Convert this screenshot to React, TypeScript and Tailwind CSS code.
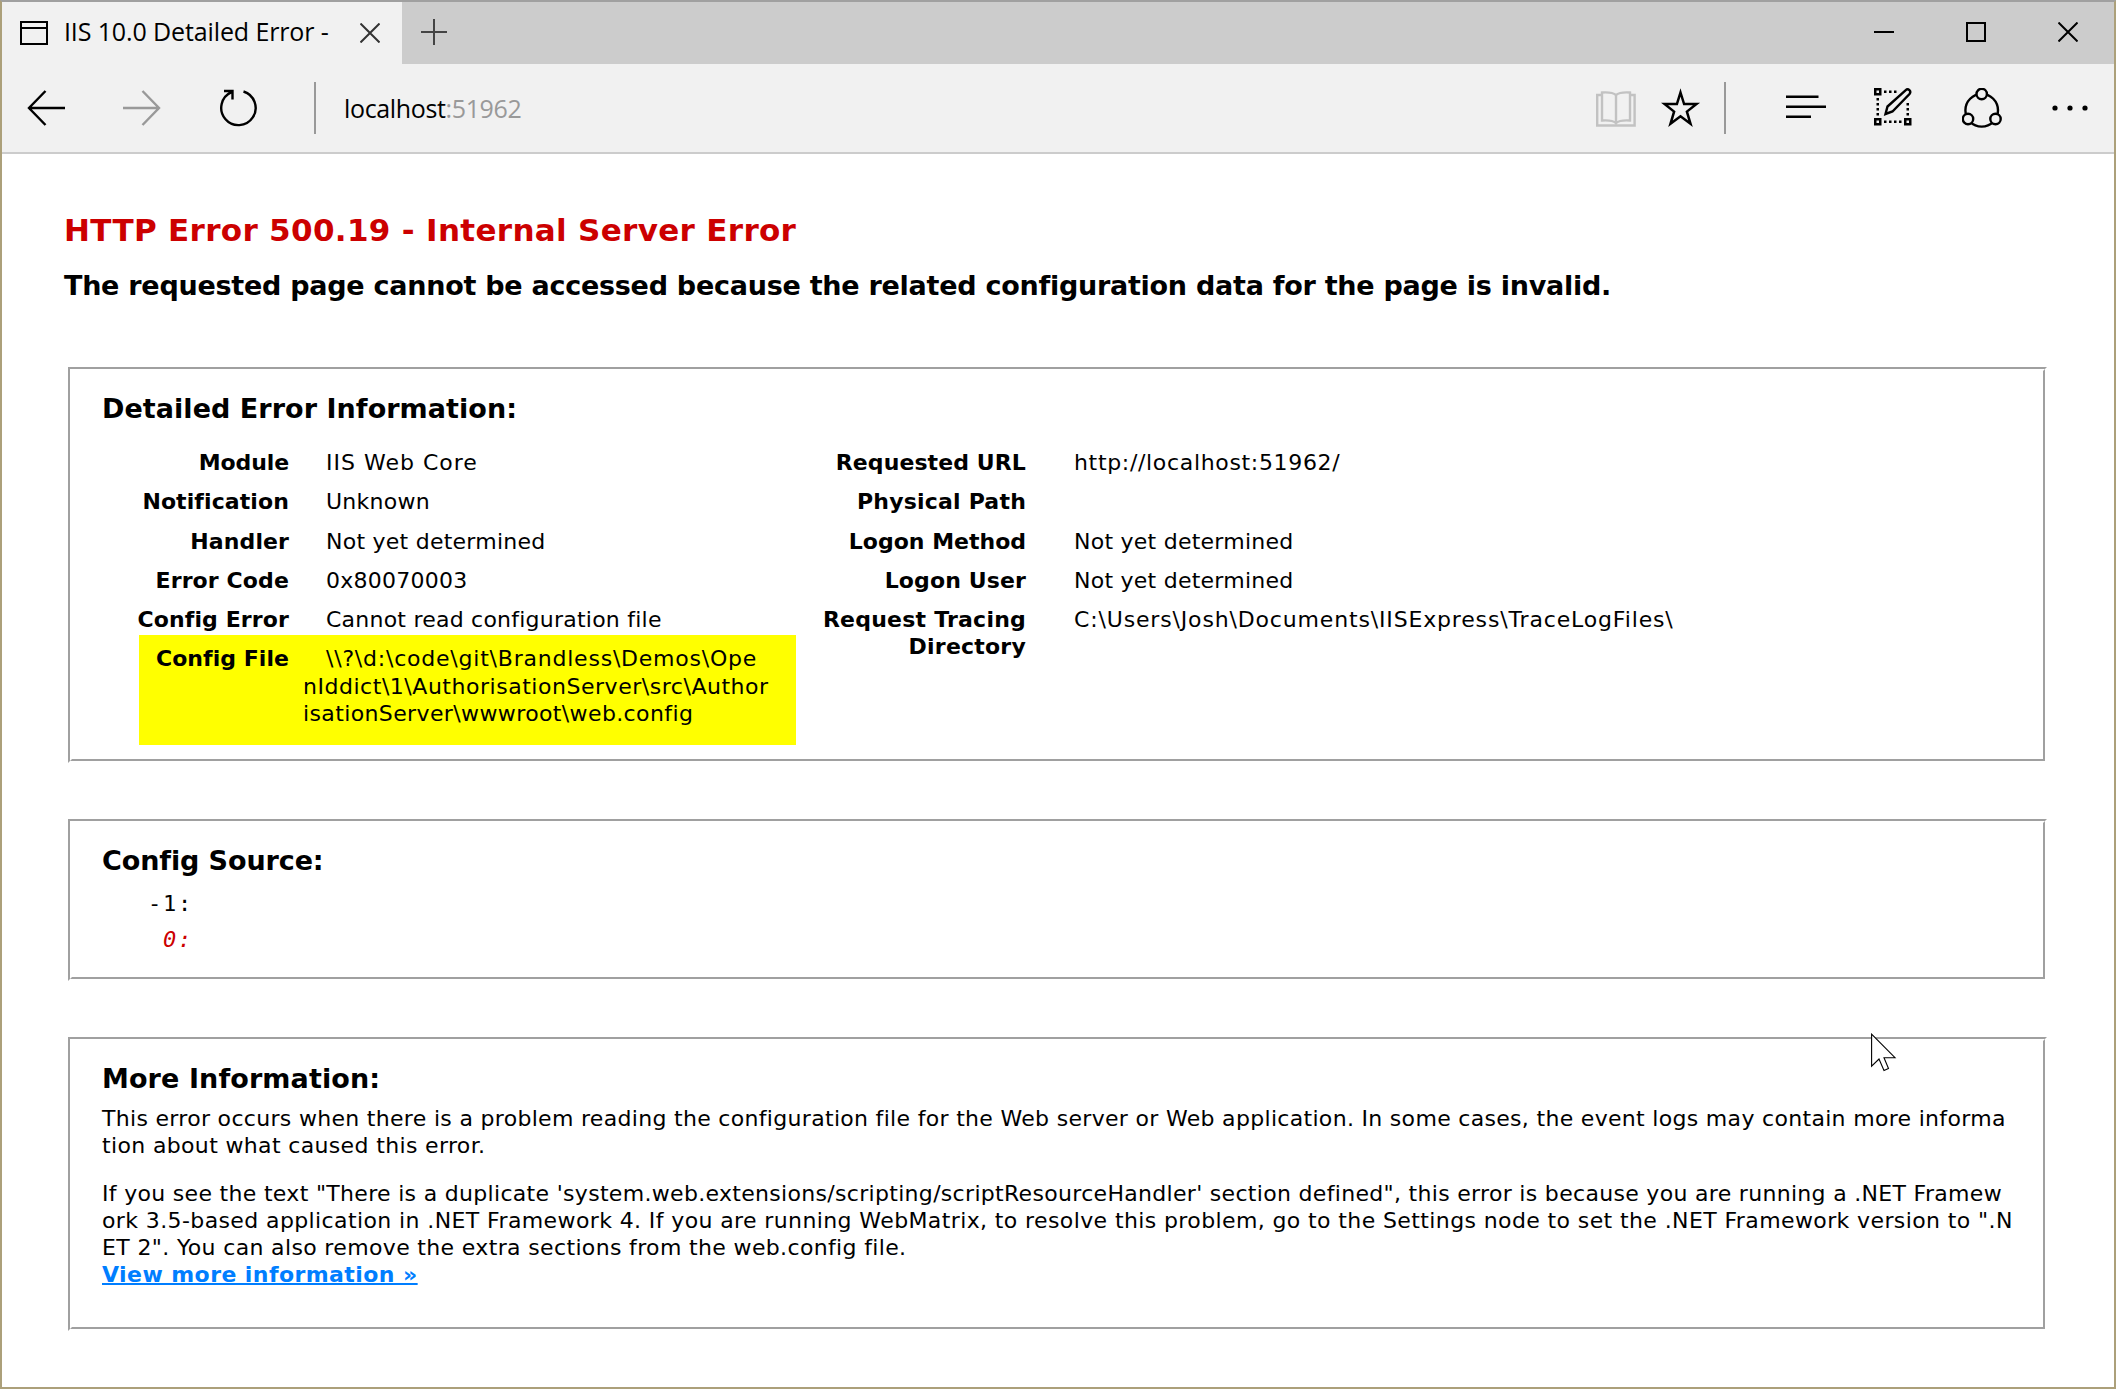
import type { ReactNode } from "react";

function Sep() {
  return <div className="h-[52px] w-[2px] shrink-0 bg-[#999]" />;
}

function Panel({ title, className, titleClass, children }: { title: string; className: string; titleClass: string; children: ReactNode }) {
  return (
    <section className={`ml-[4px] border-2 border-t-[#a0a0a0] border-r-white border-b-white border-l-[#a0a0a0] ${className}`}>
      <div className="h-full border-2 border-t-white border-r-[#a0a0a0] border-b-[#a0a0a0] border-l-white pt-[21px] pl-[30px]">
        <h3 className={`text-[27px] leading-[34px] font-bold whitespace-nowrap ${titleClass}`}>{title}</h3>
        {children}
      </div>
    </section>
  );
}

type RowProps = { label: ReactNode; value?: string; labelClass: string; valueClass: string };

function Row({ label, value, labelClass, valueClass }: RowProps) {
  return (
    <div className="flex h-[39.3px]">
      <div className={`shrink-0 text-right font-bold ${labelClass}`}>{label}</div>
      <div className={valueClass}>{value}</div>
    </div>
  );
}

const left: RowProps[] = [
  { label: "Module", value: "IIS Web Core", labelClass: "w-[187px] tracking-[-0.1px]", valueClass: "pl-[37px] tracking-[1px]" },
  { label: "Notification", value: "Unknown", labelClass: "w-[187px] tracking-[0.1px]", valueClass: "pl-[37px] tracking-[0.25px]" },
  { label: "Handler", value: "Not yet determined", labelClass: "w-[187px] tracking-[0.1px]", valueClass: "pl-[37px] tracking-[0.25px]" },
  { label: "Error Code", value: "0x80070003", labelClass: "w-[187px] tracking-[0.12px]", valueClass: "pl-[37px] tracking-[0.25px]" },
  { label: "Config Error", value: "Cannot read configuration file", labelClass: "w-[187px] tracking-[0.12px]", valueClass: "pl-[37px] tracking-[0.23px]" },
];

const right: RowProps[] = [
  { label: "Requested URL", value: "http://localhost:51962/", labelClass: "w-[204px] tracking-[0.1px]", valueClass: "pl-[48px] tracking-[0.67px]" },
  { label: "Physical Path", labelClass: "w-[204px] tracking-[0.2px]", valueClass: "" },
  { label: "Logon Method", value: "Not yet determined", labelClass: "w-[204px]", valueClass: "pl-[48px] tracking-[0.25px]" },
  { label: "Logon User", value: "Not yet determined", labelClass: "w-[204px] tracking-[0.13px]", valueClass: "pl-[48px] tracking-[0.25px]" },
  {
    label: <>Request Tracing<br />Directory</>,
    value: "C:\\Users\\Josh\\Documents\\IISExpress\\TraceLogFiles\\",
    labelClass: "w-[204px] tracking-[0.22px]",
    valueClass: "pl-[48px] tracking-[0.84px]",
  },
];

export default function App() {
  return (
    <div className="relative flex h-[1389px] w-[2116px] flex-col overflow-hidden border-2 border-x-[#aca07a] border-t-[#a0a0a0] border-b-[#aca07a] bg-white text-black">
      <header className="font-['Open_Sans',sans-serif]">
        <div className="flex h-[62px] bg-[#ccc]">
          <div className="flex h-full w-[400px] items-center bg-[#f1f1f1] pl-[18px]">
            <svg width="28" height="24" viewBox="0 0 28 24" fill="none" stroke="#000" strokeWidth="2" className="shrink-0">
              <path d="M1 1h26v22H1zM1 7h26" />
            </svg>
            <span className="ml-[16px] w-[296px] pb-[2px] text-[25px] tracking-[-0.12px] whitespace-nowrap">IIS 10.0 Detailed Error -</span>
            <svg width="20" height="20" viewBox="0 0 20 20" stroke="#333" strokeWidth="2" className="shrink-0">
              <path d="M.5.5l19 19M19.500.5l-19 19" />
            </svg>
          </div>
          <svg width="26" height="26" viewBox="0 0 26 26" stroke="#444" strokeWidth="2" className="mt-[17px] ml-[19px]">
            <path d="M13 0v26M0 13h26" />
          </svg>
          <div className="mt-[20px] mr-[36px] ml-auto flex gap-[72px]">
            <svg width="20" height="20" stroke="#000" strokeWidth="2"><path d="M0 10h20" /></svg>
            <svg width="20" height="20" stroke="#000" strokeWidth="2" fill="none"><path d="M1 1h18v18H1z" /></svg>
            <svg width="20" height="20" stroke="#000" strokeWidth="2"><path d="M.5.5l19 19M19.500.5l-19 19" /></svg>
          </div>
        </div>
        <div className="flex h-[90px] items-center border-b-2 border-[#ccc] bg-[#f1f1f1] pl-[25px]">
          <svg width="39" height="36" viewBox="0 0 39 36" fill="none" stroke="#000" strokeWidth="2.400">
            <path d="M38 18H2M18.500 1L2 18l16.500 17" />
          </svg>
          <svg width="39" height="36" viewBox="0 0 39 36" fill="none" stroke="#999" strokeWidth="2.400" className="ml-[56px]">
            <path d="M1 18h36M20.500 1L37 18 20.500 35" />
          </svg>
          <svg width="38" height="38" viewBox="0 0 38 38" fill="none" stroke="#000" strokeWidth="2.400" className="ml-[58px]">
            <path d="M24.500 2.500A17.200 17.200 0 1 1 12.500 3.200M5 2h8.500v8.500" />
          </svg>
          <div className="ml-[57px]"><Sep /></div>
          <span className="ml-[28px] w-[1252px] pt-[2px] text-[25px] tracking-[-0.36px] whitespace-nowrap">
            localhost<span className="text-[#999]">:51962</span>
          </span>
          <svg width="40" height="36" viewBox="0 0 40 36" fill="none" stroke="#c2c2c2" strokeWidth="2.400" className="mt-[2px] shrink-0">
            <path d="M6 4H1.200v30.500h37.400V4H34M20 4v28M20 4c-3-2.500-7-3-14-2.500v28c7-.5 11 0 14 2.500 3-2.500 7-3 14-2.500v-28C27 1 23 1.500 20 4z" />
          </svg>
          <svg width="40" height="40" viewBox="0 0 40 40" fill="none" stroke="#000" strokeWidth="2.500" className="ml-[25px] shrink-0">
            <path d="M19.500 4.500l3.600 11.500h12.400l-9.600 7.600 3.600 12.200-10-7.600-10 7.600 3.600-12.200L3.500 16h12.400z" />
          </svg>
          <div className="ml-[23px]"><Sep /></div>
          <svg width="40" height="24" viewBox="0 0 40 24" stroke="#000" strokeWidth="2.500" className="-mt-[2px] ml-[60px] shrink-0">
            <path d="M0 1.750h32.500M0 11.750h40M0 21.750h25" />
          </svg>
          <svg width="38" height="38" viewBox="0 0 38 38" className="-mt-[2px] mr-[50px] ml-[48px] shrink-0" fill="none" stroke="#000" strokeWidth="2.500">
            <path d="M1.250 1.250h5v5h-5zM1.250 31.250h5v5h-5zM31.250 31.250h5v5h-5z" />
            <path strokeDasharray="2.500 2.500" d="M10 3.750h12.500M10 33.750h17.500M3.750 10v17.500M33.750 15v12.500" />
            <path d="M11.500 26l2-7.500L31.500 2.300c2.800-2.400 6.200.8 4 3.700L18.500 23.500z" strokeWidth="2.400" />
            <path d="M15 22L33 4.500" strokeWidth="1" stroke="#f1f1f1" />
          </svg>
          <svg width="40" height="40" viewBox="0 0 40 40" fill="none" stroke="#000" strokeWidth="2.400" className="shrink-0">
            <circle cx="19.700" cy="22.300" r="16.300" />
            <g fill="#f1f1f1">
              <circle cx="19.700" cy="6" r="5.200" />
              <circle cx="6" cy="31" r="5.200" />
              <circle cx="33.500" cy="31" r="5.200" />
            </g>
          </svg>
          <svg width="36" height="6" viewBox="0 0 36 6" className="ml-[50px] shrink-0">
            <circle cx="3" cy="3" r="2.600" />
            <circle cx="18" cy="3" r="2.600" />
            <circle cx="33" cy="3" r="2.600" />
          </svg>
        </div>
      </header>

      <main className="flex flex-1 flex-col pr-[67px] pl-[62px] font-['DejaVu_Sans',sans-serif] text-[22px] leading-[27px]">
        <h1 className="mt-[56px] text-[31px] leading-[40px] font-bold tracking-[0.32px] whitespace-nowrap text-[#c00]">HTTP Error 500.19 - Internal Server Error</h1>
        <h2 className="mt-[17px] pt-px text-[27px] leading-[36px] font-bold tracking-[-0.26px] whitespace-nowrap">The requested page cannot be accessed because the related configuration data for the page is invalid.</h2>
        <Panel title="Detailed Error Information:" titleClass="tracking-[0.05px]" className="mt-[63px] h-[396px]">
          <div className="mt-[23px] flex whitespace-nowrap">
            <div className="w-[696px]">
              {left.map((row, i) => <Row key={i} {...row} />)}
              <div className="-mt-[10.5px] ml-[37px] flex h-[110px] w-[657px] bg-[#ff0] pt-[10.5px] leading-[27.4px]">
                <div className="w-[150px] text-right font-bold tracking-[0.05px]">Config File</div>
                <div className="pl-[14px]">
                  <div className="indent-[23px] tracking-[0.78px]">\\?\d:\code\git\Brandless\Demos\Ope</div>
                  <div className="tracking-[0.53px]">nIddict\1\AuthorisationServer\src\Author</div>
                  <div className="tracking-[0.38px]">isationServer\wwwroot\web.config</div>
                </div>
              </div>
            </div>
            <div className="ml-[24px]">
              {right.map((row, i) => <Row key={i} {...row} />)}
            </div>
          </div>
        </Panel>
        <Panel title="Config Source:" titleClass="tracking-[-0.1px]" className="mt-[56px] h-[162px]">
          <pre className="mt-[8px] ml-[46px] font-['DejaVu_Sans_Mono',monospace] text-[22px] leading-[36px] tracking-[1.75px]">-1:<div className="text-[#c00] italic"> 0:</div></pre>
        </Panel>
        <Panel title="More Information:" titleClass="tracking-[0.1px]" className="mt-[56px] h-[294px]">
          <div className="mt-[9px] whitespace-nowrap">
            <p className="tracking-[0.31px]">This error occurs when there is a problem reading the configuration file for the Web server or Web application. In some cases, the event logs may contain more informa</p>
            <p className="tracking-[0.35px]">tion about what caused this error.</p>
            <p className="mt-[21px] tracking-[0.31px]">If you see the text "There is a duplicate 'system.web.extensions/scripting/scriptResourceHandler' section defined", this error is because you are running a .NET Framew</p>
            <p className="tracking-[0.39px]">ork 3.5-based application in .NET Framework 4. If you are running WebMatrix, to resolve this problem, go to the Settings node to set the .NET Framework version to ".N</p>
            <p className="tracking-[0.35px]">ET 2". You can also remove the extra sections from the web.config file.</p>
            <a className="font-bold tracking-[0.43px] text-[#007eff] underline decoration-2">View more information »</a>
          </div>
        </Panel>
      </main>

      <svg width="26" height="40" viewBox="0 0 26 40" className="absolute top-[1031px] left-[1869px]" fill="#fff" stroke="#000" strokeWidth="1.100">
        <path d="M.6 1.200l23.400 23.500H13l4.500 10.800-4.500 2-5-11.500-7.400 7.200z" />
      </svg>
    </div>
  );
}
